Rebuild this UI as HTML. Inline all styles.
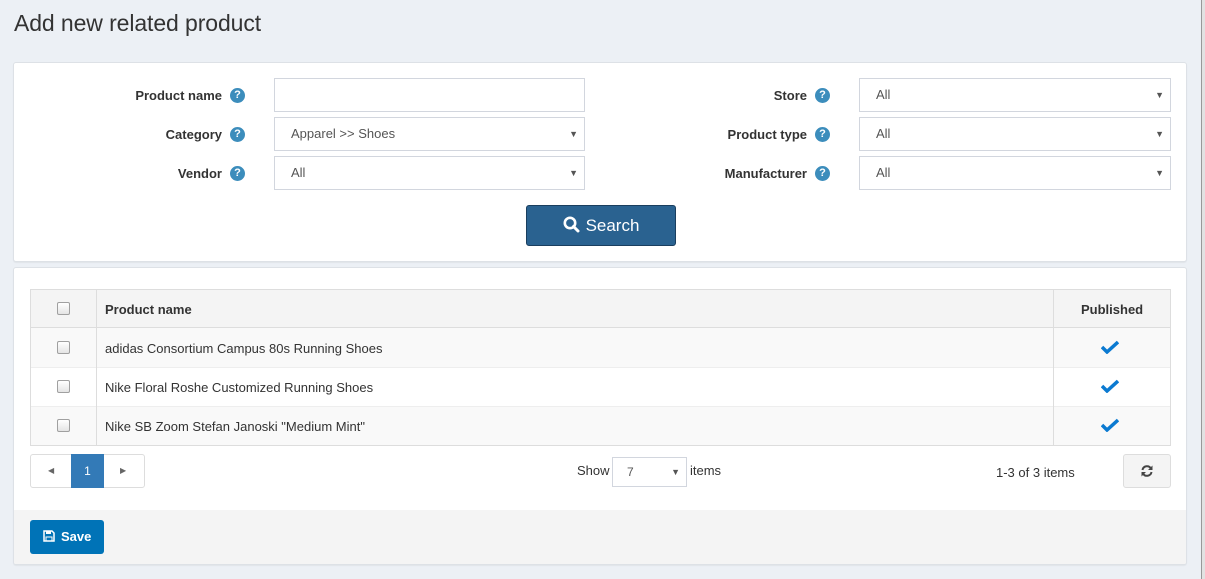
<!DOCTYPE html>
<html><head><style>
*{box-sizing:border-box;margin:0;padding:0}
body{width:1205px;height:579px;background:#ecf0f5;font-family:"Liberation Sans",sans-serif;font-size:13px;color:#333;position:relative;overflow:hidden}
.abs{position:absolute}
h1{position:absolute;left:14px;top:10px;font-size:23px;font-weight:normal;color:#333;letter-spacing:-0.1px}
.panel{position:absolute;background:#fff;border:1px solid #dde1e6;border-radius:3px;box-shadow:0 1px 1px rgba(0,0,0,.05)}
.lbl{position:absolute;font-weight:bold;font-size:13px;text-align:right;color:#333;line-height:15px}
.q{display:inline-block;width:15px;height:15px;border-radius:50%;background:#3c8dbc;color:#fff;font-size:11px;line-height:15px;text-align:center;font-weight:bold;vertical-align:top;margin-left:8px}
.inp{position:absolute;height:34px;border:1px solid #d2d6de;background:#fff;font-size:13px;padding-left:16px;line-height:32px;color:#555}
.inp .ar{position:absolute;right:6px;top:0;font-size:9px;color:#555}
.cb{position:absolute;width:13px;height:13px;border:1px solid #a0a0a0;border-radius:2px;background:linear-gradient(#fff,#e4e4e4)}
</style></head><body>
<h1>Add new related product</h1>
<div class="abs" style="left:1201px;top:0;width:1px;height:579px;background:#999"></div>
<div class="abs" style="left:1202px;top:0;width:3px;height:579px;background:#e2e2e2"></div>

<div class="panel" style="left:13px;top:62px;width:1174px;height:200px"></div>
<div class="lbl" style="left:100px;top:88px;width:145px">Product name<span class="q">?</span></div>
<div class="lbl" style="left:100px;top:127px;width:145px">Category<span class="q">?</span></div>
<div class="lbl" style="left:100px;top:166px;width:145px">Vendor<span class="q">?</span></div>
<div class="inp" style="left:274px;top:78px;width:311px"></div>
<div class="inp" style="left:274px;top:117px;width:311px">Apparel &gt;&gt; Shoes<span class="ar">▼</span></div>
<div class="inp" style="left:274px;top:156px;width:311px">All<span class="ar">▼</span></div>
<div class="lbl" style="left:660px;top:88px;width:170px">Store<span class="q">?</span></div>
<div class="lbl" style="left:660px;top:127px;width:170px">Product type<span class="q">?</span></div>
<div class="lbl" style="left:660px;top:166px;width:170px">Manufacturer<span class="q">?</span></div>
<div class="inp" style="left:859px;top:78px;width:312px">All<span class="ar">▼</span></div>
<div class="inp" style="left:859px;top:117px;width:312px">All<span class="ar">▼</span></div>
<div class="inp" style="left:859px;top:156px;width:312px">All<span class="ar">▼</span></div>
<div class="abs" style="left:526px;top:205px;width:150px;height:41px;background:#2a6290;border:1px solid #1a3e5e;border-radius:3px;color:#fff;font-size:17px;line-height:39px;text-align:center">
<svg width="17" height="17" viewBox="0 0 17 17" style="vertical-align:-2px;margin-right:6px"><circle cx="7" cy="7" r="5.2" fill="none" stroke="#fff" stroke-width="2.6"/><path d="M10.5 10.5L15 15" stroke="#fff" stroke-width="3" stroke-linecap="round"/></svg>Search</div>

<div class="panel" style="left:13px;top:267px;width:1174px;height:298px;overflow:hidden">
<div class="abs" style="left:0;top:242px;width:1174px;height:56px;background:#f4f4f4"></div>
</div>
<div class="abs" style="left:30px;top:289px;width:1141px;height:157px;border:1px solid #ddd;background:#f9f9f9"></div>
<div class="abs" style="left:31px;top:290px;width:1139px;height:38px;background:#f4f4f4;border-bottom:1px solid #ddd"></div>
<div class="abs" style="left:31px;top:367px;width:1139px;height:40px;background:#fff;border-top:1px solid #eee;border-bottom:1px solid #eee"></div>
<div class="abs" style="left:96px;top:290px;width:1px;height:155px;background:#ddd"></div>
<div class="abs" style="left:1053px;top:290px;width:1px;height:155px;background:#ddd"></div>
<div class="abs" style="left:105px;top:302px;font-weight:bold">Product name</div>
<div class="abs" style="left:1081px;top:302px;font-weight:bold">Published</div>
<div class="cb" style="left:57px;top:302px"></div>
<div class="cb" style="left:57px;top:341px"></div>
<div class="cb" style="left:57px;top:380px"></div>
<div class="cb" style="left:57px;top:419px"></div>
<div class="abs" style="left:105px;top:341px">adidas Consortium Campus 80s Running Shoes</div>
<div class="abs" style="left:105px;top:380px">Nike Floral Roshe Customized Running Shoes</div>
<div class="abs" style="left:105px;top:419px">Nike SB Zoom Stefan Janoski "Medium Mint"</div>
<svg class="abs" style="left:1101px;top:340px" width="18" height="14" viewBox="0 0 18 14"><path d="M1 7l5 5L17 2" fill="none" stroke="#0b7ad1" stroke-width="3.5"/></svg>
<svg class="abs" style="left:1101px;top:379px" width="18" height="14" viewBox="0 0 18 14"><path d="M1 7l5 5L17 2" fill="none" stroke="#0b7ad1" stroke-width="3.5"/></svg>
<svg class="abs" style="left:1101px;top:418px" width="18" height="14" viewBox="0 0 18 14"><path d="M1 7l5 5L17 2" fill="none" stroke="#0b7ad1" stroke-width="3.5"/></svg>

<div class="abs" style="left:30px;top:454px;width:115px;height:34px;border:1px solid #ddd;border-radius:3px;background:#fff"></div>
<div class="abs" style="left:48px;top:466px;font-size:8px;color:#666">◀</div>
<div class="abs" style="left:71px;top:454px;width:33px;height:34px;background:#337ab7;color:#fff;text-align:center;line-height:34px;font-size:12px">1</div>
<div class="abs" style="left:120px;top:466px;font-size:8px;color:#666">▶</div>
<div class="abs" style="left:577px;top:463px">Show</div>
<div class="inp" style="left:612px;top:457px;width:75px;height:30px;line-height:28px;font-size:12px;padding-left:14px">7<span class="ar">▼</span></div>
<div class="abs" style="left:690px;top:463px">items</div>
<div class="abs" style="left:996px;top:465px">1-3 of 3 items</div>
<div class="abs" style="left:1123px;top:454px;width:48px;height:34px;border:1px solid #ddd;border-radius:3px;background:#f4f4f4"></div>
<svg class="abs" style="left:1140px;top:464px" width="14" height="14" viewBox="0 0 14 14"><path d="M2.5 6A4.6 4.6 0 0 1 11 4.5" fill="none" stroke="#444" stroke-width="2"/><path d="M12.5 1.5v4.5H8z" fill="#444"/><path d="M11.5 8A4.6 4.6 0 0 1 3 9.5" fill="none" stroke="#444" stroke-width="2"/><path d="M1.5 12.5V8H6z" fill="#444"/></svg>

<div class="abs" style="left:30px;top:520px;width:74px;height:34px;background:#0073b7;border-radius:3px;color:#fff;font-size:13px;font-weight:bold;line-height:34px;padding-left:13px">
<svg width="12" height="12" viewBox="0 0 12 12" style="vertical-align:-1px;margin-right:6px"><path d="M1 1h8l2 2v8H1z" fill="none" stroke="#fff" stroke-width="1.5"/><rect x="3" y="1" width="5" height="3" fill="#fff"/><rect x="3" y="7" width="6" height="4" fill="none" stroke="#fff"/></svg>Save</div>
</body></html>
